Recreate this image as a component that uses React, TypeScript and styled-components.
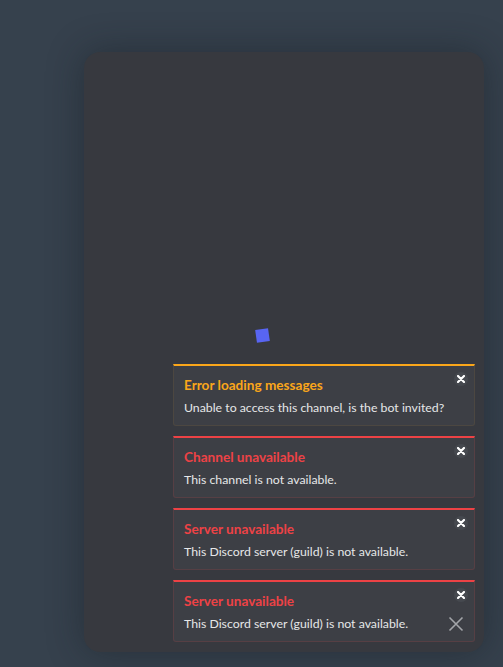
import React from 'react'
import styled, { createGlobalStyle } from 'styled-components'

const GlobalStyle = createGlobalStyle`
  html, body {
    margin: 0;
    padding: 0;
    height: 100%;
    background: #36414d;
    font-family: Lato, 'Noto Sans', sans-serif;
  }
  #root {
    height: 100%;
  }
`

const Page = styled.div`
  height: 100%;
  box-sizing: border-box;
  padding: 52px 19px 15px 84px;
`

const Panel = styled.div`
  position: relative;
  width: 400px;
  height: 600px;
  box-sizing: border-box;
  background: #37393f;
  border-radius: 16px;
  box-shadow: 0 0 36px rgba(20, 26, 34, 0.45);
  display: flex;
  flex-direction: column;
  justify-content: flex-end;
  align-items: flex-end;
  padding: 0 9px 10px 0;
`

const Spinner = styled.div`
  position: absolute;
  left: 172px;
  top: 277px;
  width: 13px;
  height: 13px;
  background: #5865f2;
  transform: rotate(-8deg);
`

const Stack = styled.div`
  width: 302px;
  display: flex;
  flex-direction: column;
  gap: 10px;
`

const Card = styled.div<{ $accent: string; $edge: string }>`
  position: relative;
  box-sizing: border-box;
  height: 62px;
  background: #3d3f45;
  border: 1px solid ${({ $edge }) => $edge};
  border-top: 2px solid ${({ $accent }) => $accent};
  border-radius: 0 0 3px 3px;
  padding: 11px 10px 0 10px;
`

const Title = styled.div<{ $color: string }>`
  color: ${({ $color }) => $color};
  font-size: 13.6px;
  font-weight: 700;
  line-height: 16px;
`

const Text = styled.div`
  color: #e6e7e8;
  font-size: 12.3px;
  line-height: 16px;
  margin-top: 7px;
  white-space: nowrap;
`

const CloseDot = styled.button`
  position: absolute;
  top: 6px;
  right: 6px;
  width: 14px;
  height: 14px;
  padding: 0;
  border: none;
  border-radius: 50%;
  background: #46494f;
  display: flex;
  align-items: center;
  justify-content: center;
  cursor: pointer;
`

const Dismiss = styled.button`
  position: absolute;
  right: 9px;
  bottom: 8px;
  width: 18px;
  height: 18px;
  padding: 0;
  border: none;
  background: transparent;
  display: flex;
  align-items: center;
  justify-content: center;
  cursor: pointer;
`

const YELLOW = '#faa61a'
const RED = '#ed4245'

const notices = [
  { title: 'Error loading messages', text: 'Unable to access this channel, is the bot invited?', color: YELLOW, edge: 'rgba(250,166,26,0.08)' },
  { title: 'Channel unavailable', text: 'This channel is not available.', color: RED, edge: 'rgba(237,66,69,0.14)' },
  { title: 'Server unavailable', text: 'This Discord server (guild) is not available.', color: RED, edge: 'rgba(237,66,69,0.14)' },
  { title: 'Server unavailable', text: 'This Discord server (guild) is not available.', color: RED, edge: 'rgba(237,66,69,0.14)', dismiss: true },
]

export default function App() {
  return (
    <>
      <GlobalStyle />
      <Page>
        <Panel>
          <Spinner />
          <Stack>
            {notices.map((n, i) => (
              <Card key={i} $accent={n.color} $edge={n.edge}>
                <Title $color={n.color}>{n.title}</Title>
                <Text>{n.text}</Text>
                <CloseDot aria-label="Close">
                  <svg width="8" height="8" viewBox="0 0 8 8">
                    <path d="M1 1L7 7M7 1L1 7" stroke="#fff" strokeWidth="2.2" strokeLinecap="round" />
                  </svg>
                </CloseDot>
                {n.dismiss && (
                  <Dismiss aria-label="Dismiss">
                    <svg width="16" height="16" viewBox="0 0 16 16">
                      <path d="M1.5 1.5L14.5 14.5M14.5 1.5L1.5 14.5" stroke="#a3a5a9" strokeWidth="1.6" />
                    </svg>
                  </Dismiss>
                )}
              </Card>
            ))}
          </Stack>
        </Panel>
      </Page>
    </>
  )
}
